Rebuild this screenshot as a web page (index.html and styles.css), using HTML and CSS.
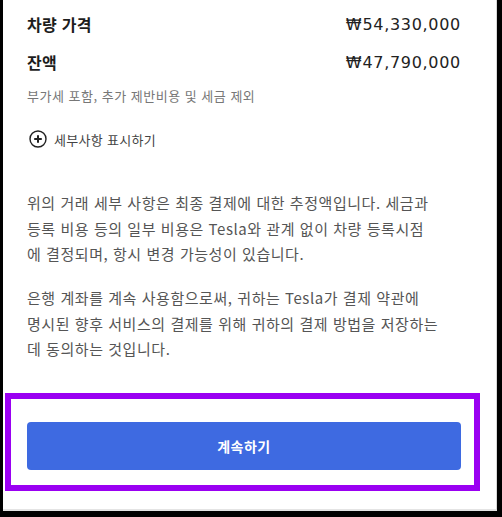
FILE: index.html
```html
<!DOCTYPE html>
<html lang="ko">

<head>
  <meta charset="UTF-8" />
  <meta name="viewport" content="width=device-width, initial-scale=1.0" />
  <title>결제</title>
  <link rel="stylesheet" href="styles.css">
</head>

<body>
  <div class="screen">
    <div class="row">
      <span class="label">차량 가격</span>
      <span class="price">₩54,330,000</span>
    </div>
    <div class="row second">
      <span class="label">잔액</span>
      <span class="price">₩47,790,000</span>
    </div>
    <p class="note">부가세 포함, 추가 제반비용 및 세금 제외</p>

    <div class="details">
      <svg class="plus" width="18" height="18" viewBox="0 0 18 18">
        <circle cx="9" cy="9" r="8" fill="none" stroke="#222" stroke-width="1.4" />
        <path d="M9 5.2v7.6M5.2 9h7.6" stroke="#222" stroke-width="2" />
      </svg>
      <span>세부사항 표시하기</span>
    </div>

    <p class="text first">위의 거래 세부 사항은 최종 결제에 대한 추정액입니다. 세금과<br>
      등록 비용 등의 일부 비용은 Tesla와 관계 없이 차량 등록시점<br>
      에 결정되며, 항시 변경 가능성이 있습니다.</p>
    <p class="text">은행 계좌를 계속 사용함으로써, 귀하는 Tesla가 결제 약관에<br>
      명시된 향후 서비스의 결제를 위해 귀하의 결제 방법을 저장하는<br>
      데 동의하는 것입니다.</p>

    <div class="highlight">
      <button class="continue">계속하기</button>
    </div>
  </div>
</body>

</html>
```

FILE: styles.css
```css
body {
  margin: 0;
  background-color: #000;
  font-family: "Noto Sans CJK KR", "Noto Sans", sans-serif;
}

.screen {
  margin-left: 3px;
  width: 494px;
  height: 511px;
  box-sizing: border-box;
  padding: 12px 35px 0 24px;
  background-color: #fff;
  border-right: 1px solid #d8d8d8;
  border-bottom: 2px solid #e4e4e4;
  overflow: hidden;
}

.row {
  display: flex;
  justify-content: space-between;
  align-items: center;
  height: 24px;
}

.second {
  margin-top: 14px;
}

.label {
  font-size: 16px;
  font-weight: 700;
  color: #1d1d1d;
  letter-spacing: 0.3px;
}

.price {
  font-family: "DejaVu Sans", sans-serif;
  font-size: 16px;
  color: #222;
  letter-spacing: 0.7px;
}

.note {
  margin: 12px 0 0;
  font-size: 13px;
  line-height: 20px;
  color: #777;
  letter-spacing: 0.5px;
}

.details {
  display: flex;
  align-items: center;
  gap: 7px;
  margin-top: 23px;
  height: 20px;
  font-size: 13px;
  color: #444;
  letter-spacing: 0.3px;
}

.plus {
  margin-left: 2px;
}

.text {
  margin: 18.5px -20px 0 0;
  font-size: 15px;
  line-height: 25.5px;
  color: #555;
  letter-spacing: 0.55px;
  white-space: nowrap;
}

.text.first {
  margin-top: 41px;
}

.highlight {
  margin: 31px -19px 0 -22px;
  padding: 23px 13px 15px 16px;
  border: 6px solid #9a00f2;
}

.continue {
  display: block;
  width: 100%;
  height: 48px;
  border: none;
  border-radius: 4px;
  background-color: #3e6ae1;
  color: #fff;
  font-family: "Noto Sans CJK KR", sans-serif;
  font-size: 14px;
  font-weight: 700;
  letter-spacing: 0.5px;
}
```
